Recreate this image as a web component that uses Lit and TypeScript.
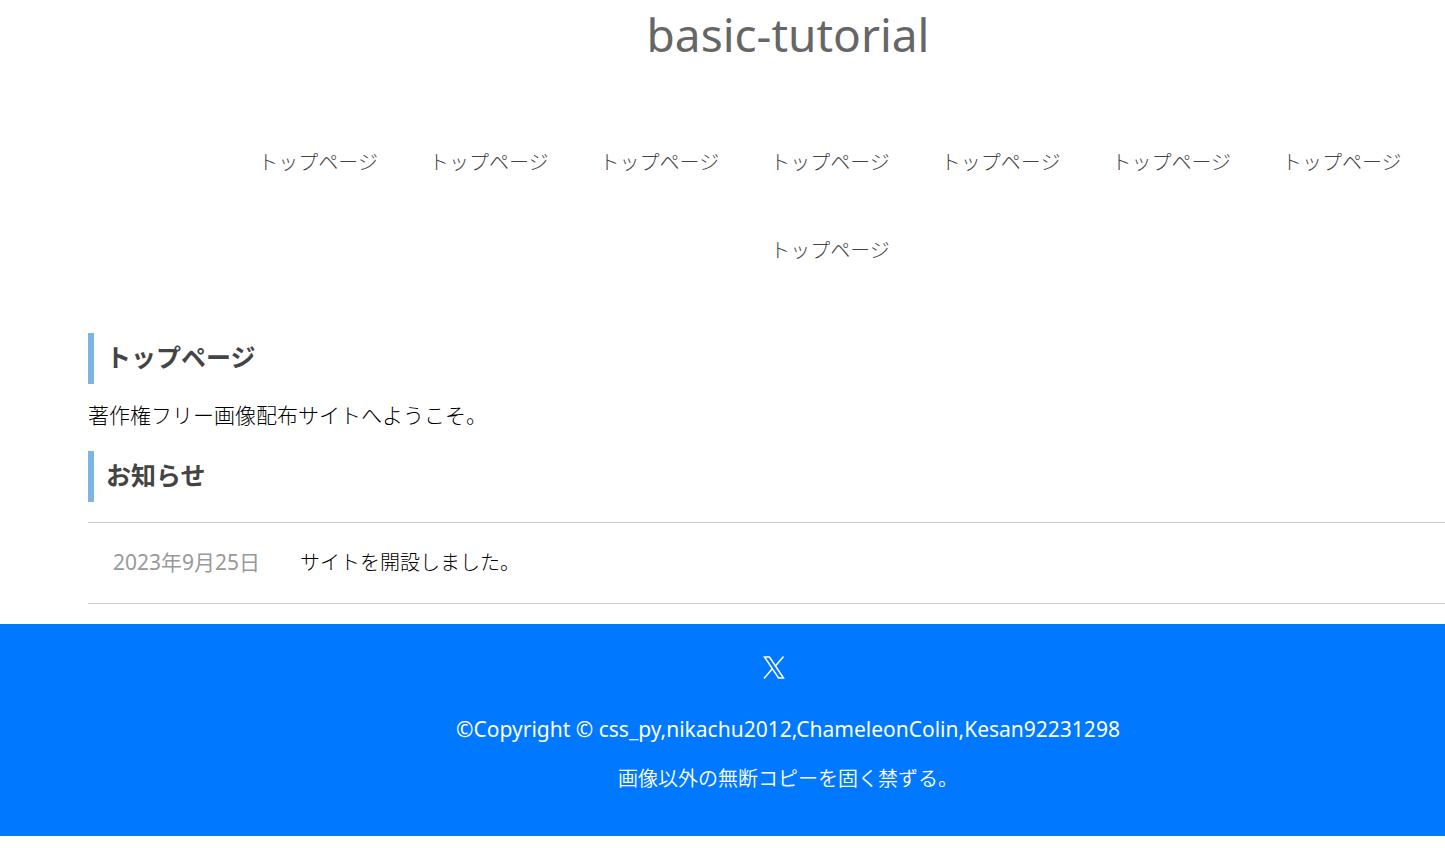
import { LitElement, html, css } from "lit";
import { customElement } from "lit/decorators.js";

const NAV_ITEMS = Array.from({ length: 8 }, () => "トップページ");

@customElement("app-root")
export class AppRoot extends LitElement {
  static styles = css`
    :host {
      display: block;
      overflow-x: hidden;
      background: #fff;
      color: #000;
      font-family: "Noto Sans", "Noto Sans CJK JP", sans-serif;
      font-size: 20px;
      line-height: 30px;
    }
    h1, h2, p, ul, dl, dd { margin: 0; padding: 0; }
    a { color: inherit; text-decoration: none; }
    .title {
      padding-left: 131px;
      text-align: center;
      color: #666;
      font-size: 46px;
      font-weight: 400;
      line-height: 68px;
    }
    .nav {
      display: flex;
      flex-wrap: wrap;
      justify-content: center;
      gap: 58px 51px;
      padding: 79px 0 68px 215px;
      list-style: none;
      color: #444;
    }
    .nav, .welcome, .text {
      font-family: "Noto Sans CJK JP", sans-serif;
      font-weight: 300;
    }
    main { padding-left: 88px; }
    .heading {
      padding: 0 0 3px 12px;
      border-left: 6px solid #7cb4e6;
      color: #444;
      font-size: 25px;
      font-weight: 700;
      line-height: 48px;
    }
    .welcome {
      padding: 15px 0 22px;
      font-size: 21px;
    }
    .news {
      display: flex;
      gap: 40px;
      margin: 20px 0;
      padding: 24px 25px 26px;
      border: solid #ccc;
      border-width: 1px 0;
    }
    .date {
      color: #999;
      font-size: 21px;
    }
    .text { color: #000; }
    footer {
      display: flex;
      flex-direction: column;
      align-items: center;
      gap: 20px;
      padding: 32px 0 42px 131px;
      background: #0078ff;
      color: #fff;
    }
    .social {
      display: flex;
      padding: 0 28px 15px 0;
    }
    .copyright { font-size: 21px; }
    .notice { font-weight: 350; }
  `;

  render() {
    return html`
      <header>
        <h1 class="title">basic-tutorial</h1>
        <nav>
          <ul class="nav">
            ${NAV_ITEMS.map((label) => html`<li><a href="#">${label}</a></li>`)}
          </ul>
        </nav>
      </header>
      <main>
        <h2 class="heading">トップページ</h2>
        <p class="welcome">著作権フリー画像配布サイトへようこそ。</p>
        <h2 class="heading">お知らせ</h2>
        <dl class="news">
          <dt class="date">2023年9月25日</dt>
          <dd class="text">サイトを開設しました。</dd>
        </dl>
      </main>
      <footer>
        <a class="social" href="#" aria-label="X">
          <svg width="22" height="23" viewBox="0 0 22 23" fill="none" stroke="#fff" stroke-width="1.5">
            <path d="M1.500 1h5l14 21h-5zM20.500 .5L12 10.500M9.500 12.500L1 22.500" />
          </svg>
        </a>
        <p class="copyright">©Copyright © css_py,nikachu2012,ChameleonColin,Kesan92231298</p>
        <p class="notice">画像以外の無断コピーを固く禁ずる。</p>
      </footer>
    `;
  }
}
